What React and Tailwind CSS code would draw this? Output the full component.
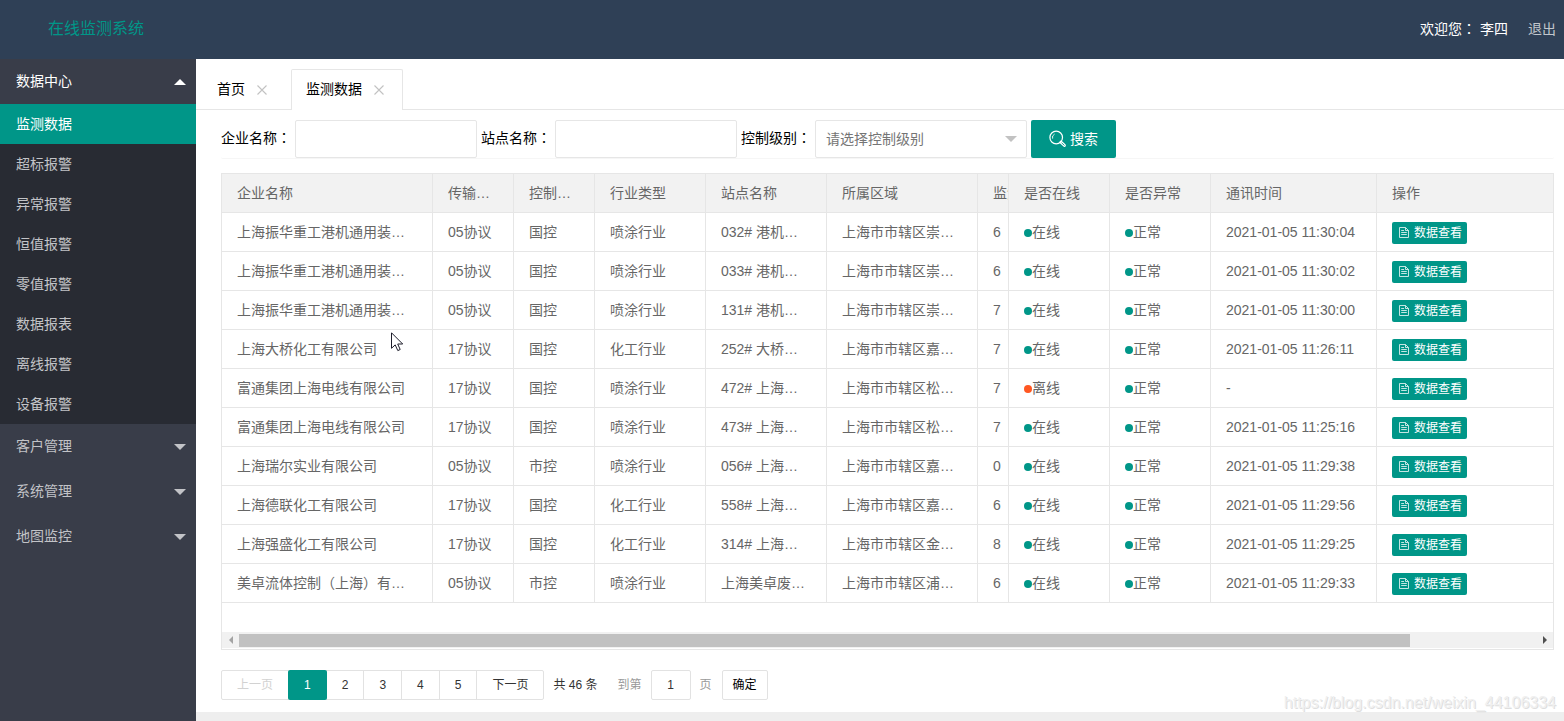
import { useState } from 'react';

const alarmItems = ['监测数据', '超标报警', '异常报警', '恒值报警', '零值报警', '数据报表', '离线报警', '设备报警'];
const otherGroups = ['客户管理', '系统管理', '地图监控'];

const columns = [
  { title: '企业名称', width: 'w-[211px]' },
  { title: '传输协议', width: 'w-[81px]' },
  { title: '控制级别', width: 'w-[81px]' },
  { title: '行业类型', width: 'w-[111px]' },
  { title: '站点名称', width: 'w-[121px]' },
  { title: '所属区域', width: 'w-[151px]' },
  { title: '监测', width: 'w-[31px]', clipped: true },
  { title: '是否在线', width: 'w-[101px]' },
  { title: '是否异常', width: 'w-[101px]' },
  { title: '通讯时间', width: 'w-[166px]' },
  { title: '操作', width: '' },
];

const rows = [
  ['上海振华重工港机通用装备公司', '05协议', '国控', '喷涂行业', '032# 港机通用', '上海市市辖区崇明区', '6', true, '2021-01-05 11:30:04'],
  ['上海振华重工港机通用装备公司', '05协议', '国控', '喷涂行业', '033# 港机通用', '上海市市辖区崇明区', '6', true, '2021-01-05 11:30:02'],
  ['上海振华重工港机通用装备公司', '05协议', '国控', '喷涂行业', '131# 港机通用', '上海市市辖区崇明区', '7', true, '2021-01-05 11:30:00'],
  ['上海大桥化工有限公司', '17协议', '国控', '化工行业', '252# 大桥化工', '上海市市辖区嘉定区', '7', true, '2021-01-05 11:26:11'],
  ['富通集团上海电线有限公司', '17协议', '国控', '喷涂行业', '472# 上海电线', '上海市市辖区松江区', '7', false, '-'],
  ['富通集团上海电线有限公司', '17协议', '国控', '喷涂行业', '473# 上海电线', '上海市市辖区松江区', '7', true, '2021-01-05 11:25:16'],
  ['上海瑞尔实业有限公司', '05协议', '市控', '喷涂行业', '056# 上海瑞尔', '上海市市辖区嘉定区', '0', true, '2021-01-05 11:29:38'],
  ['上海德联化工有限公司', '17协议', '国控', '化工行业', '558# 上海德联', '上海市市辖区嘉定区', '6', true, '2021-01-05 11:29:56'],
  ['上海强盛化工有限公司', '17协议', '国控', '化工行业', '314# 上海强盛', '上海市市辖区金山区', '8', true, '2021-01-05 11:29:25'],
  ['美卓流体控制（上海）有限公司', '05协议', '市控', '喷涂行业', '上海美卓废气排口', '上海市市辖区浦东区', '6', true, '2021-01-05 11:29:33'],
];

// Full-width punctuation is set in the face that centres it in its square.
function Han({ children }) {
  return children.split(/([：（）])/).map((part, i) =>
    i % 2 ? (
      <span key={i} lang="zh-TW" className="font-['Noto_Sans_CJK_TC',sans-serif] leading-none">{part}</span>
    ) : (
      part
    ),
  );
}

function Caret({ up, className }) {
  return (
    <svg className={className} width="12" height="6" viewBox="0 0 12 6" fill="currentColor" aria-hidden="true">
      <path d={up ? 'M0 6L6 0L12 6Z' : 'M0 0L6 6L12 0Z'} />
    </svg>
  );
}

function CloseIcon() {
  return (
    <svg width="10" height="10" viewBox="0 0 10 10" fill="none" stroke="#c2c2c2" strokeWidth="1.1" aria-hidden="true">
      <path d="M0.5 0.5L9.5 9.5M9.5 0.5L0.5 9.5" />
    </svg>
  );
}

function SearchIcon() {
  return (
    <svg width="18" height="18" viewBox="0 0 18 18" fill="none" stroke="currentColor" aria-hidden="true">
      <circle cx="7.2" cy="7.5" r="6.3" strokeWidth="1.2" />
      <path d="M3.6 8.6A3.9 3.9 0 0 1 5.6 4.1" strokeWidth="0.9" />
      <path d="M11.9 12.2L15.4 15.4" strokeWidth="3" strokeLinecap="round" />
      <path d="M12.8 13L15.2 15.2" stroke="#009688" strokeWidth="0.9" strokeLinecap="round" />
    </svg>
  );
}

function FileIcon() {
  return (
    <svg width="10" height="11" viewBox="0 0 10 11" fill="none" stroke="currentColor" strokeWidth="0.9" opacity="0.85" aria-hidden="true">
      <path d="M0.5 0.5H6.5L9.5 3.5V10.5H0.5Z" />
      <path d="M6.5 0.5V3.5H9.5M2.2 3.5H5M2.2 5.5H7.8M2.2 7.5H7.8" />
    </svg>
  );
}

function Status({ ok, children }) {
  return (
    <span className="flex items-center">
      <span className={ok ? 'mt-0.5 size-2 rounded-full bg-[#009688]' : 'mt-0.5 size-2 rounded-full bg-[#ff5722]'} />
      {children}
    </span>
  );
}

function Cell({ children }) {
  return (
    <td className="h-[39px] truncate border-r border-b border-[#e6e6e6] px-[15px] last:border-r-0">{children}</td>
  );
}

function Tab({ active, children }) {
  return (
    <div
      className={
        active
          ? 'flex h-[41px] items-center rounded-t-xs border border-b-0 border-[#e6e6e6] bg-white px-[14px]'
          : 'flex h-[41px] items-center px-[15px]'
      }
    >
      <button type="button" role="tab" aria-selected={active} className="pb-0.5">{children}</button>
      <button type="button" aria-label="关闭" className="ml-2 flex size-[18px] items-center justify-center">
        <CloseIcon />
      </button>
    </div>
  );
}

function Sidebar() {
  const group = 'flex h-[45px] w-full items-center justify-between pr-[10px] pl-4';
  return (
    <nav className="w-[196px] shrink-0 bg-[#393d49] text-[#c2c3c7]">
      <button type="button" className={`${group} text-white`}>
        <span className="pb-0.5">数据中心</span>
        <Caret up />
      </button>
      <ul className="bg-[#282b33]">
        {alarmItems.map((item, i) => (
          <li key={item}>
            <a
              href="#"
              className={i === 0 ? 'flex h-10 items-center bg-[#009688] px-4 text-white' : 'flex h-10 items-center px-4'}
            >
              {item}
            </a>
          </li>
        ))}
      </ul>
      {otherGroups.map((item) => (
        <button key={item} type="button" className={group}>
          <span className="pb-0.5">{item}</span>
          <Caret />
        </button>
      ))}
    </nav>
  );
}

function SearchForm() {
  const input = 'h-[38px] w-[182px] rounded-xs border border-[#e6e6e6] bg-white px-[10px] outline-none';
  return (
    <form
      className="flex items-center gap-1 rounded-xs border-b border-[#f6f6f6] text-black"
      onSubmit={(e) => e.preventDefault()}
    >
      <label htmlFor="company" className="pb-0.5"><Han>企业名称：</Han></label>
      <input id="company" type="text" className={input} />
      <label htmlFor="site" className="pb-0.5"><Han>站点名称：</Han></label>
      <input id="site" type="text" className={input} />
      <label htmlFor="level" className="pb-0.5"><Han>控制级别：</Han></label>
      <div className="relative">
        <select
          id="level"
          defaultValue=""
          className="h-[38px] w-[212px] appearance-none rounded-xs border border-[#e6e6e6] bg-white px-[10px] text-[#757575] outline-none"
        >
          <option value="">请选择控制级别</option>
          <option value="国控">国控</option>
          <option value="市控">市控</option>
        </select>
        <Caret className="pointer-events-none absolute top-4 right-[10px] text-[#c2c2c2]" />
      </div>
      <button type="submit" className="flex h-[38px] items-center gap-[3px] rounded-xs bg-[#009688] px-[18px] text-white">
        <SearchIcon />
        搜索
      </button>
    </form>
  );
}

function DataTable() {
  return (
    <div className="mt-[14px] border border-[#e6e6e6] text-[#666]">
      <table className="w-full table-fixed border-separate border-spacing-0">
        <colgroup>
          {columns.map((c) => (
            <col key={c.title} className={c.width} />
          ))}
        </colgroup>
        <thead>
          <tr>
            {columns.map((c) => (
              <th
                key={c.title}
                scope="col"
                className={
                  c.clipped
                    ? 'h-[39px] overflow-hidden border-r border-b border-[#e6e6e6] bg-[#f2f2f2] pl-[15px] text-left font-normal whitespace-nowrap'
                    : 'h-[39px] truncate border-r border-b border-[#e6e6e6] bg-[#f2f2f2] px-[15px] text-left font-normal last:border-r-0'
                }
              >
                {c.title}
              </th>
            ))}
          </tr>
        </thead>
        <tbody>
          {rows.map(([company, protocol, level, industry, site, area, count, online, time]) => (
            <tr key={site}>
              <Cell><Han>{company}</Han></Cell>
              <Cell>{protocol}</Cell>
              <Cell>{level}</Cell>
              <Cell>{industry}</Cell>
              <Cell>{site}</Cell>
              <Cell>{area}</Cell>
              <td className="h-[39px] overflow-hidden border-r border-b border-[#e6e6e6] pl-[15px]">{count}</td>
              <Cell><Status ok={online}>{online ? '在线' : '离线'}</Status></Cell>
              <Cell><Status ok>正常</Status></Cell>
              <Cell>{time}</Cell>
              <Cell>
                <button
                  type="button"
                  className="mt-px flex h-[22px] items-center gap-[5px] rounded-xs bg-[#009688] pr-[5px] pl-[7px] text-xs text-white"
                >
                  <FileIcon />
                  数据查看
                </button>
              </Cell>
            </tr>
          ))}
        </tbody>
      </table>
      <div className="mt-[29px] mb-px flex h-4 items-center bg-[#f1f1f1]">
        <div className="flex w-[17px] shrink-0 justify-center text-[#a3a3a3]">
          <svg width="4" height="8" viewBox="0 0 4 8" fill="currentColor" aria-hidden="true"><path d="M4 0V8L0 4Z" /></svg>
        </div>
        <div className="flex-1">
          <div className="h-[13px] w-[90.2%] bg-[#c1c1c1]" />
        </div>
        <div className="flex w-4 shrink-0 justify-center text-[#505050]">
          <svg width="4" height="8" viewBox="0 0 4 8" fill="currentColor" aria-hidden="true"><path d="M0 0V8L4 4Z" /></svg>
        </div>
      </div>
    </div>
  );
}

function Pagination() {
  const [page, setPage] = useState(1);
  const base = 'h-[30px] border border-[#e2e2e2] px-[15px]';
  return (
    <div className="mt-5 flex items-center text-xs text-[#333]">
      <div className="flex">
        <button type="button" disabled className={`${base} rounded-l-xs text-[#d2d2d2]`}>上一页</button>
        {[1, 2, 3, 4, 5].map((n) => (
          <button
            key={n}
            type="button"
            onClick={() => setPage(n)}
            className={
              n === page
                ? 'relative -ml-px h-[30px] rounded-xs bg-[#009688] px-4 text-white'
                : `${base} -ml-px`
            }
          >
            {n}
          </button>
        ))}
        <button type="button" className={`${base} -ml-px rounded-r-xs`}>下一页</button>
      </div>
      <span className="ml-[9px]">共 46 条</span>
      <label htmlFor="page" className="ml-5 text-[#999]">到第</label>
      <input
        id="page"
        type="text"
        defaultValue="1"
        className="mx-[9px] h-[30px] w-10 rounded-xs border border-[#e2e2e2] bg-white text-center outline-none"
      />
      <span className="text-[#999]">页</span>
      <button type="button" className="ml-[10px] h-[30px] rounded-xs border border-[#e2e2e2] px-[10px] text-black">确定</button>
    </div>
  );
}

export default function App() {
  return (
    <div
      lang="zh-CN"
      className="relative flex min-h-screen flex-col bg-white font-['Liberation_Sans','Noto_Sans_CJK_SC',sans-serif] text-sm text-black"
    >
      <header className="flex h-[59px] items-center justify-between bg-[#2f4056] pr-2 pl-12">
        <h1 className="pb-0.5 text-base text-[#009688]">在线监测系统</h1>
        <div className="flex items-center gap-5 pb-0.5 text-white">
          <span><Han>欢迎您： 李四</Han></span>
          <a href="#" className="text-[#c1c6cc]">退出</a>
        </div>
      </header>
      <div className="flex flex-1">
        <Sidebar />
        <main className="flex min-w-0 flex-1 flex-col">
          <div role="tablist" className="border-b border-[#e6e6e6] pt-[10px] pl-[6px]">
            <div className="-mb-px flex gap-[5px]">
              <Tab>首页</Tab>
              <Tab active>监测数据</Tab>
            </div>
          </div>
          <div className="pt-[10px] pr-[10px] pb-3 pl-[25px]">
            <SearchForm />
            <DataTable />
            <Pagination />
          </div>
          <footer className="mt-auto h-[9px] bg-[#eee]" />
        </main>
      </div>
      <p className="pointer-events-none absolute right-2 bottom-1.5 text-base text-[#f0f0f0] [text-shadow:1px_1px_0_#dedede]">
        https://blog.csdn.net/weixin_44106334
      </p>
      <svg
        className="pointer-events-none absolute top-[332px] left-[391px]"
        width="13"
        height="20"
        viewBox="0 0 13 20"
        fill="#fff"
        stroke="#1d1d2b"
        strokeWidth="1"
        aria-hidden="true"
      >
        <path d="M0.5 0.8V16.3L4.2 12.9L6.8 18.6L9.2 17.5L6.7 12H11.7Z" />
      </svg>
    </div>
  );
}
